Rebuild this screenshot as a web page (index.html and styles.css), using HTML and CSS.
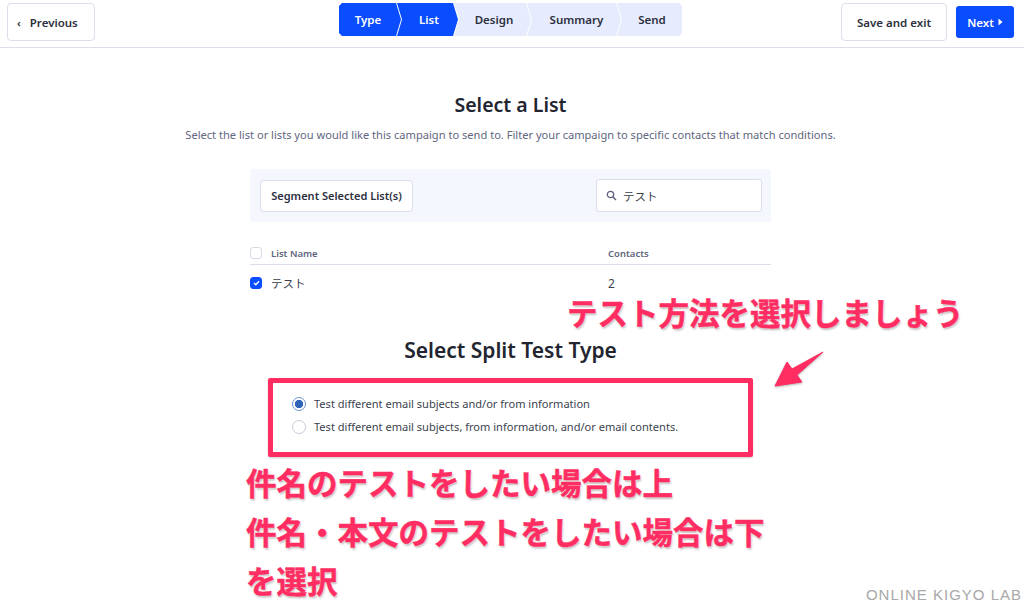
FILE: index.html
```html
<!DOCTYPE html>
<html lang="en">
<head>
<meta charset="UTF-8">
<meta name="viewport" content="width=device-width, initial-scale=1.0">
<title>Select a List</title>
<link rel="stylesheet" href="styles.css">
</head>
<body>
    <div class="topbar">
        <button class="btn btn-prev"><span class="prev-arrow">‹</span>Previous</button>
        <div class="steps">
            <div class="step step-first step-on">Type</div>
            <div class="step step-on step-list">List</div>
            <div class="step step-design">Design</div>
            <div class="step step-summary">Summary</div>
            <div class="step step-last">Send</div>
        </div>
        <div class="top-actions">
            <button class="btn btn-save">Save and exit</button>
            <button class="btn-next">Next
                <svg width="5" height="8" viewBox="0 0 5 8"><path d="M0.5 0.5 L4.5 4 L0.5 7.5 Z" fill="#fff"/></svg>
            </button>
        </div>
    </div>

    <div class="content">
        <h2 class="title">Select a List</h2>
        <p class="subtitle">Select the list or lists you would like this campaign to send to. Filter your campaign to specific contacts that match conditions.</p>

        <div class="toolbar">
            <button class="btn btn-segment">Segment Selected List(s)</button>
            <div class="search">
                <svg width="11" height="11" viewBox="0 0 11 11"><circle cx="4.5" cy="4.5" r="3.2" fill="none" stroke="#5f667e" stroke-width="1.3"/><path d="M7 7 L10 10" stroke="#5f667e" stroke-width="1.5"/></svg>
                <span>テスト</span>
            </div>
        </div>

        <div class="list-table">
            <div class="list-row list-head">
                <span class="check"></span>
                <span class="col-name">List Name</span>
                <span class="col-contacts">Contacts</span>
            </div>
            <div class="list-row">
                <span class="check check-on">
                    <svg width="7" height="6" viewBox="0 0 7 6"><path d="M1 3 L2.8 4.7 L6 1.2" fill="none" stroke="#fff" stroke-width="1.4"/></svg>
                </span>
                <span class="col-name name-value">テスト</span>
                <span class="col-contacts contacts-value">2</span>
            </div>
        </div>

        <h2 class="title title-split">Select Split Test Type</h2>
        <div class="radios">
            <label class="radio-row"><span class="radio radio-on"></span>Test different email subjects and/or from information</label>
            <label class="radio-row"><span class="radio"></span>Test different email subjects, from information, and/or email contents.</label>
        </div>
    </div>

    <!-- annotations drawn on top of the screenshot -->
    <div class="note-box"></div>
    <svg class="note-arrow" width="60" height="48" viewBox="0 0 60 48">
        <path d="M1 41 L13 17 L18 24 L49 7 L23 30 L28 37 Z" fill="#ff2d62" stroke="#ff2d62" stroke-linejoin="round"/>
    </svg>
    <div class="note note-top">テスト方法を選択しましょう</div>
    <div class="note note-bottom">件名のテストをしたい場合は上<br>件名・本文のテストをしたい場合は下<br>を選択</div>
    <div class="watermark">ONLINE KIGYO LAB</div>
</body>
</html>
```

FILE: styles.css
```css
/* base */
html, body {
    margin: 0;
    height: 602px;
    overflow: hidden;
}
body {
    position: relative;
    background: #fff;
    color: #2c3040;
    font-family: "Noto Sans", "Noto Sans CJK JP", sans-serif;
}
button {
    font-family: inherit;
    cursor: pointer;
}

/* top bar */
.topbar {
    display: grid;
    grid-template-columns: 1fr auto 1fr;
    align-items: start;
    height: 44px;
    padding: 3px 10px 0 7px;
    border-bottom: 1px solid #dcdfea;
}
.btn {
    background: #fff;
    border: 1px solid #dcdfea;
    border-radius: 4px;
    color: #2c3040;
    font-size: 11.5px;
    font-weight: 600;
}
.btn-prev {
    width: 88px;
    height: 38px;
    padding: 0 0 0 9px;
    text-align: left;
}
.prev-arrow {
    margin-right: 9px;
    font-size: 11px;
}
.steps {
    display: flex;
    height: 33px;
}
.step {
    display: flex;
    align-items: center;
    justify-content: center;
    box-sizing: border-box;
    height: 33px;
    margin-right: -4px;
    padding-left: 5px;
    background: #e6ebfd;
    font-size: 11.5px;
    font-weight: 600;
    clip-path: polygon(0 0, calc(100% - 5px) 0, 100% 50%, calc(100% - 5px) 100%, 0 100%, 5px 50%);
}
.step-on {
    background: #0a4dff;
    color: #fff;
}
.step-first {
    width: 62px;
    padding: 0 4px 0 0;
    clip-path: polygon(3px 0, calc(100% - 5px) 0, 100% 50%, calc(100% - 5px) 100%, 3px 100%, 0 calc(100% - 3px), 0 3px);
}
.step-list {
    width: 61px;
    padding: 0 2px 0 5px;
}
.step-design {
    width: 77px;
    padding: 0 2px 0 5px;
}
.step-summary { width: 94px; }
.step-last {
    width: 65px;
    margin-right: 0;
    clip-path: polygon(0 0, calc(100% - 3px) 0, 100% 3px, 100% calc(100% - 3px), calc(100% - 3px) 100%, 0 100%, 5px 50%);
}
.top-actions {
    display: flex;
    justify-self: end;
    gap: 9px;
    align-items: flex-start;
}
.btn-save {
    width: 106px;
    height: 38px;
}
.btn-next {
    display: flex;
    align-items: center;
    justify-content: center;
    gap: 4px;
    width: 58px;
    height: 32px;
    margin-top: 3px;
    border: none;
    border-radius: 3px;
    background: #0a4dff;
    color: #fff;
    font-size: 11.5px;
    font-weight: 600;
}

/* main column */
.content {
    width: 521px;
    margin-left: 250px;
}
.title {
    margin: 43px -100px 0;
    font-size: 19.5px;
    line-height: 28px;
    font-weight: 600;
    text-align: center;
    color: #22252f;
}
.subtitle {
    margin: 8px -100px 0;
    font-size: 11.1px;
    line-height: 16px;
    text-align: center;
    color: #5f667e;
}
.toolbar {
    display: flex;
    justify-content: space-between;
    align-items: center;
    height: 53px;
    margin-top: 26px;
    padding: 0 9px 0 10px;
    background: #f5f7fe;
    border-radius: 3px;
}
.btn-segment {
    width: 153px;
    height: 32px;
    padding: 0;
    font-size: 11px;
}
.search {
    display: flex;
    align-items: center;
    gap: 6px;
    box-sizing: border-box;
    width: 166px;
    height: 33px;
    padding-left: 9px;
    background: #fff;
    border: 1px solid #dcdfea;
    border-radius: 3px;
    font-size: 11.5px;
    color: #3b3f4e;
}

/* list table */
.list-table {
    margin-top: 20px;
}
.list-row {
    display: flex;
    align-items: center;
    font-size: 12px;
}
.list-head {
    height: 22px;
    border-bottom: 1px solid #dcdfea;
    font-size: 9.5px;
    font-weight: 600;
    color: #5f667e;
}
.list-row:last-child {
    height: 36px;
}
.check {
    display: flex;
    align-items: center;
    justify-content: center;
    box-sizing: border-box;
    width: 12px;
    height: 12px;
    background: #fff;
    border: 1px solid #d5d9e6;
    border-radius: 3px;
}
.check-on {
    background: #0a4dff;
    border-color: #0a4dff;
}
.col-name {
    width: 337px;
    margin-left: 9px;
}
.name-value {
    font-size: 11.5px;
    color: #3b3f4e;
}
.contacts-value {
    color: #3b3f4e;
}

/* split test type */
.title-split {
    margin-top: 35px;
    font-size: 21px;
}
.radios {
    display: flex;
    flex-direction: column;
    gap: 8px;
    margin: 32px 0 0 42px;
}
.radio-row {
    display: flex;
    align-items: center;
    gap: 8px;
    height: 15px;
    font-size: 11.05px;
    color: #3b3f4e;
}
.radio {
    box-sizing: border-box;
    width: 14px;
    height: 14px;
    background: #fff;
    border: 1px solid #c9ccd6;
    border-radius: 50%;
}
.radio-on {
    border: 1px solid #6f93cf;
    background: radial-gradient(circle, #2f63b8 0, #2f63b8 3.8px, #fff 4.5px);
}

/* annotations */
.note-box {
    position: absolute;
    left: 268px;
    top: 378px;
    box-sizing: border-box;
    width: 485px;
    height: 79px;
    border: 5px solid #ff2d62;
    border-radius: 2px;
    box-shadow: 0 1px 2px rgba(0, 0, 0, 0.2);
}
.note-arrow {
    position: absolute;
    left: 774px;
    top: 345px;
    filter: drop-shadow(0 1px 1px rgba(0, 0, 0, 0.3));
}
.note {
    position: absolute;
    font-family: "Noto Sans CJK JP", sans-serif;
    font-size: 30.5px;
    font-weight: 700;
    color: #ff2d62;
    white-space: nowrap;
    -webkit-text-stroke: 0.5px #ff2d62;
    text-shadow: 0 0 2px #fff, 1px 2px 2px rgba(0, 0, 0, 0.25);
}
.note-top {
    left: 567px;
    top: 294px;
    line-height: 36px;
}
.note-bottom {
    left: 246px;
    top: 458px;
    line-height: 49px;
}
.watermark {
    position: absolute;
    right: 2px;
    bottom: -1px;
    font-family: "Liberation Sans", sans-serif;
    font-size: 15px;
    letter-spacing: 1px;
    line-height: 17px;
    color: #a8a8a8;
}
```
